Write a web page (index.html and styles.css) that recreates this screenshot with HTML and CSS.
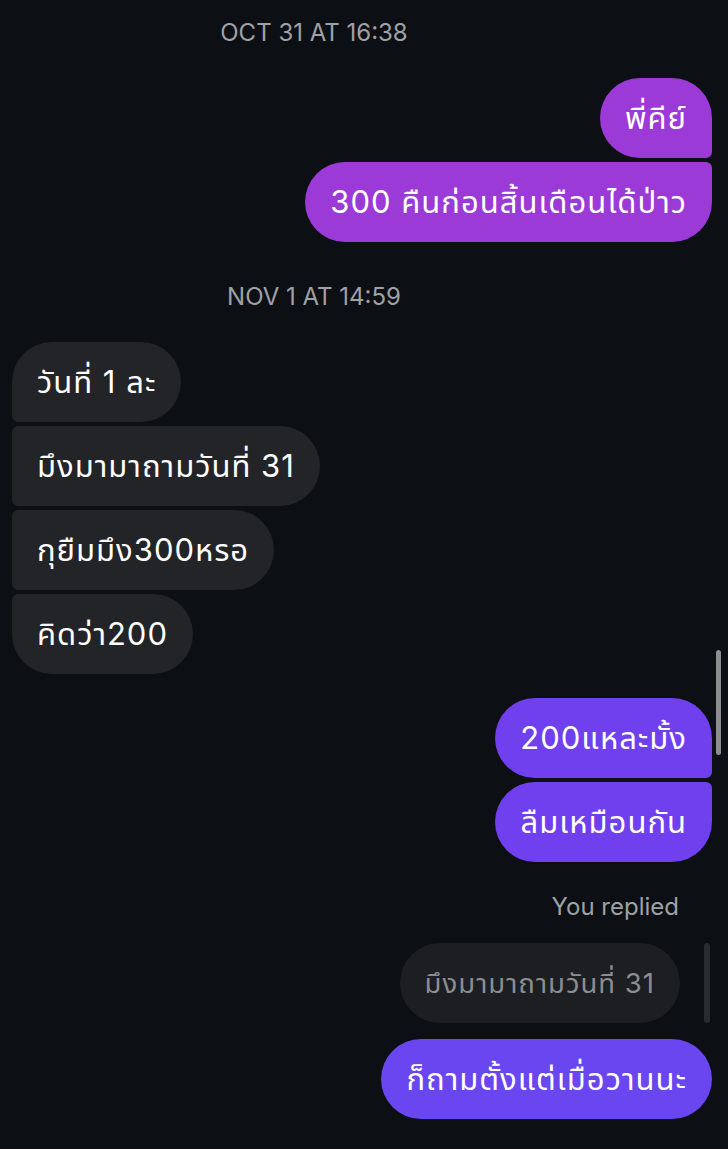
FILE: index.html
```html
<!DOCTYPE html>
<html lang="th">
<head>
  <meta charset="UTF-8">
  <title>Chat</title>
  <meta name="viewport" content="width=device-width, initial-scale=1.0">
  <link rel="stylesheet" href="styles.css">
</head>
<body>

  <div class="chat">
    <div class="stamp first">OCT 31 AT 16:38</div>

    <div class="group mine">
      <div class="bubble violet top">พี่คีย์</div>
      <div class="bubble violet bottom">300 คืนก่อนสิ้นเดือนได้ป่าว</div>
    </div>

    <div class="stamp">NOV 1 AT 14:59</div>

    <div class="group theirs">
      <div class="bubble grey top">วันที่ 1 ละ</div>
      <div class="bubble grey middle">มึงมามาถามวันที่ 31</div>
      <div class="bubble grey middle">กุยืมมึง300หรอ</div>
      <div class="bubble grey bottom">คิดว่า200</div>
    </div>

    <div class="group mine second">
      <div class="bubble indigo top">200แหละมั้ง</div>
      <div class="bubble indigo bottom">ลืมเหมือนกัน</div>
    </div>

    <div class="replied">You replied</div>
    <div class="quote-row">
      <div class="bubble quoted">มึงมามาถามวันที่ 31</div>
      <div class="quote-bar"></div>
    </div>
    <div class="group mine last">
      <div class="bubble blue">ก็ถามตั้งแต่เมื่อวานนะ</div>
    </div>
  </div>

  <div class="scrollbar"></div>

</body>
</html>
```

FILE: styles.css
```css
body {
  margin: 0;
  background-color: #0c0f13;
  font-family: Inter, "Noto Sans Thai", "Noto Sans", "DejaVu Sans", sans-serif;
  color: white;
  position: relative;
  height: 1149px;
  overflow: hidden;
}

.chat {
  display: flex;
  flex-direction: column;
  padding: 19px 16px 0 12px;
}

.stamp {
  width: 628px;
  margin-left: -12px;
  text-align: center;
  font-size: 24px;
  line-height: 28px;
  color: #9fa1a6;
  margin-top: 41px;
}

.stamp.first {
  margin-top: 0;
}

.group {
  display: flex;
  flex-direction: column;
  gap: 4px;
  margin-top: 31px;
}

.mine {
  align-items: flex-end;
}

.theirs {
  align-items: flex-start;
}

.group.second {
  margin-top: 24px;
}

.group.last {
  margin-top: 16px;
}

.bubble {
  height: 80px;
  line-height: 80px;
  padding: 0 25px;
  font-size: 31px;
  letter-spacing: 1px;
  border-radius: 40px;
  white-space: nowrap;
}

.violet { background-color: #9c3ad8; }
.indigo { background-color: #7040ee; }
.blue { background-color: #6a46f0; }
.grey { background-color: #222428; }

.mine .top { border-bottom-right-radius: 6px; }
.mine .bottom { border-top-right-radius: 6px; }
.theirs .top { border-bottom-left-radius: 6px; }
.theirs .middle { border-top-left-radius: 6px; border-bottom-left-radius: 6px; }
.theirs .bottom { border-top-left-radius: 6px; }

.replied {
  align-self: flex-end;
  margin-right: 33px;
  margin-top: 31px;
  font-size: 24px;
  line-height: 28px;
  color: #9fa1a6;
}

.quote-row {
  display: flex;
  justify-content: flex-end;
  align-items: stretch;
  gap: 24px;
  margin-top: 22px;
  margin-right: 2px;
}

.quoted {
  font-size: 27.5px;
  background-color: #1c1e22;
  color: #8c8d91;
}

.quote-bar {
  width: 6px;
  border-radius: 3px;
  background-color: #2a2c30;
}

.scrollbar {
  position: absolute;
  left: 716px;
  top: 650px;
  width: 5px;
  height: 105px;
  border-radius: 3px;
  background-color: #8c8d91;
}
```
